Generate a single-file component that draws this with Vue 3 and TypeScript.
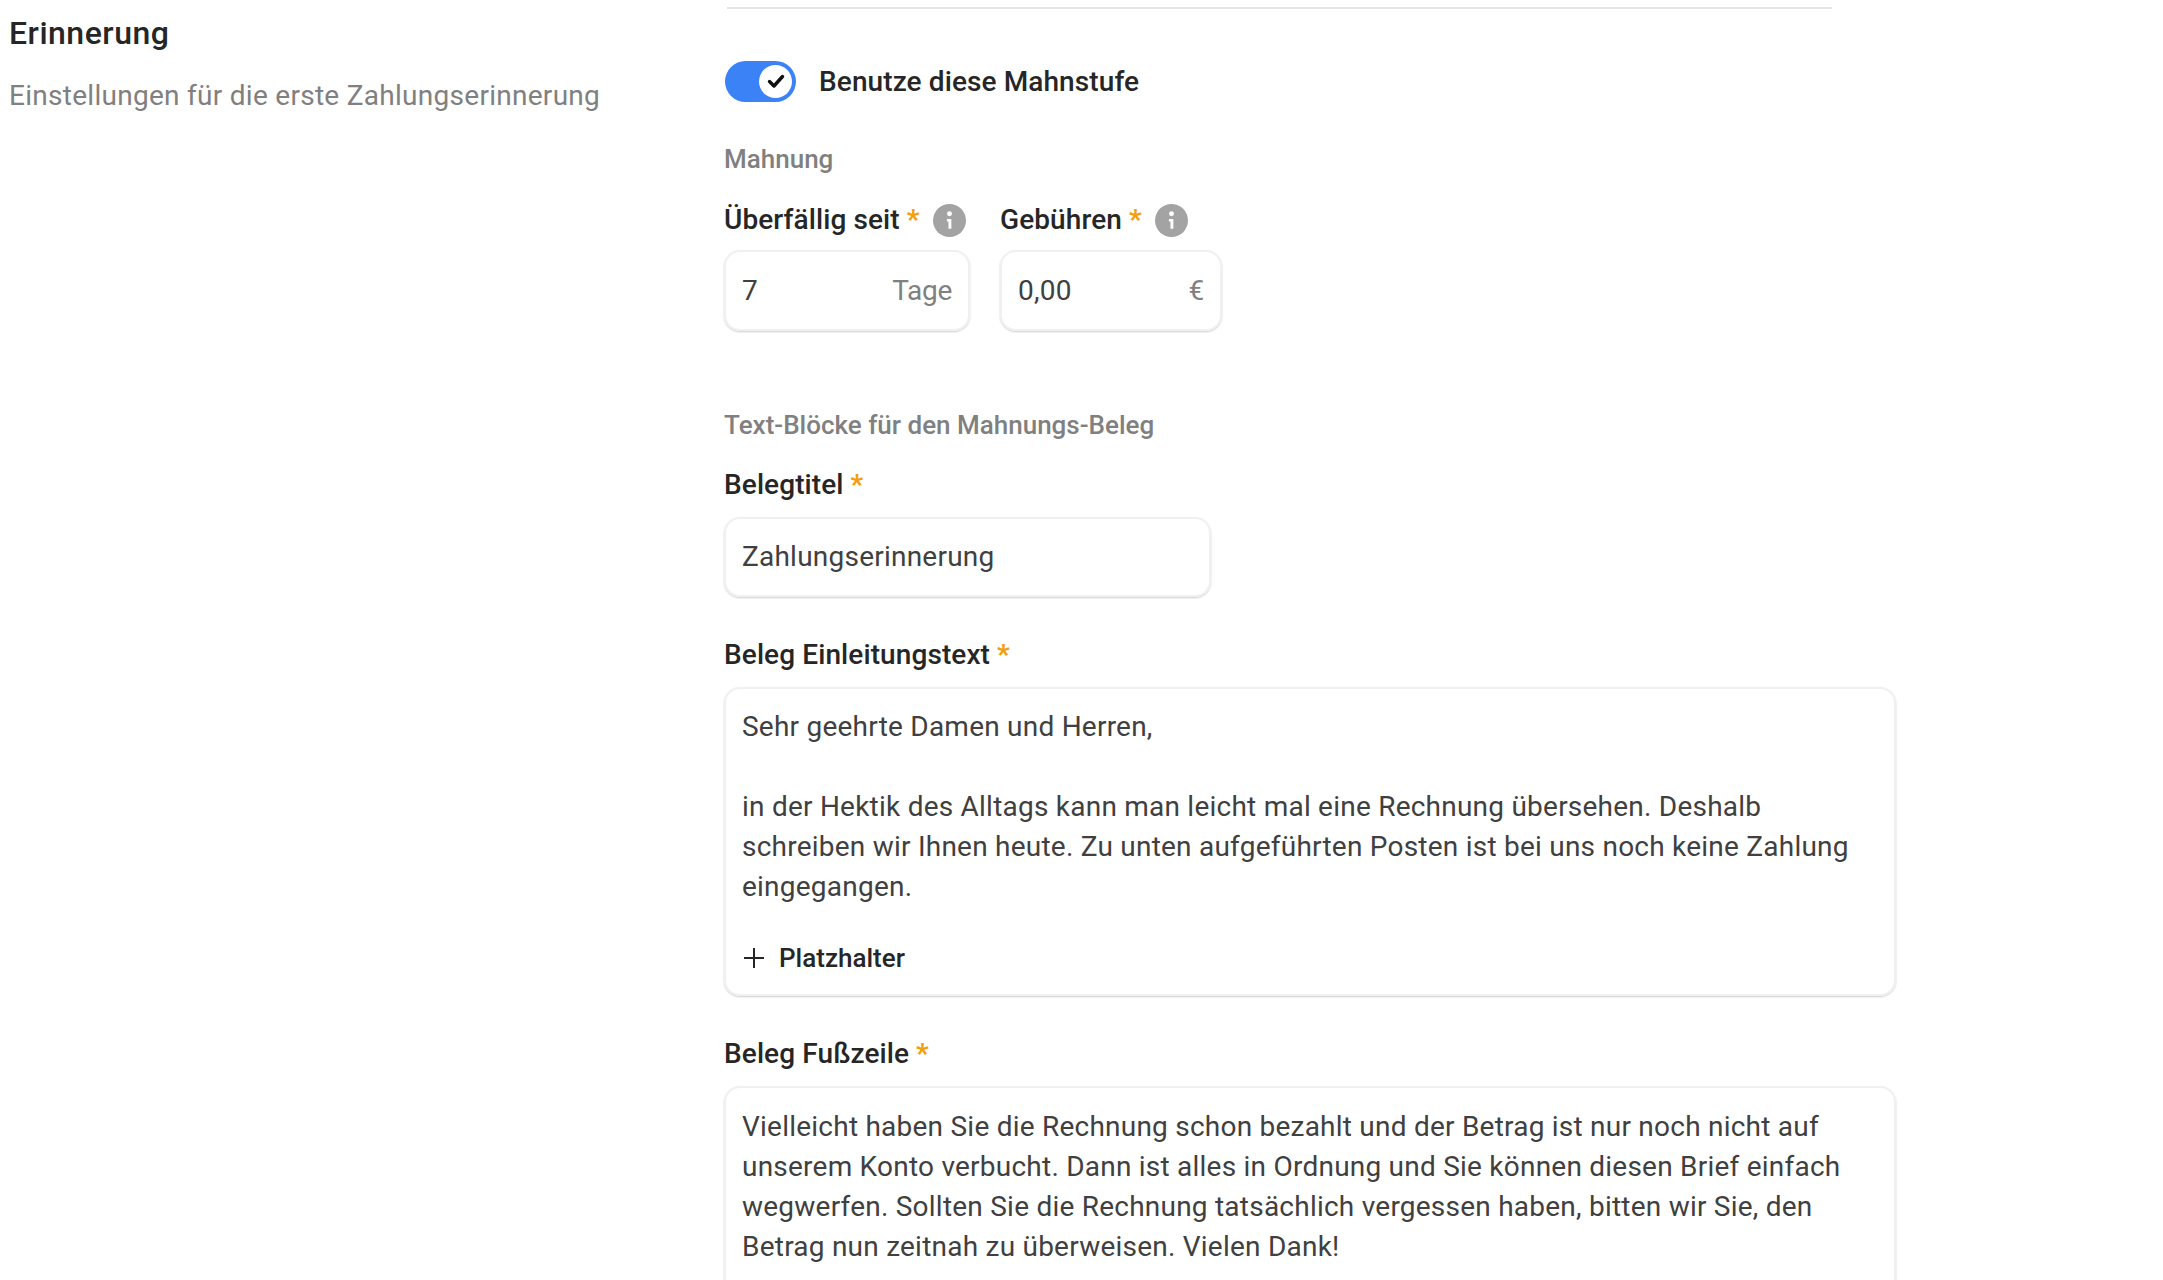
<script setup lang="ts">
const intro: string[] = [
  'Sehr geehrte Damen und Herren,',
  '',
  'in der Hektik des Alltags kann man leicht mal eine Rechnung übersehen. Deshalb',
  'schreiben wir Ihnen heute. Zu unten aufgeführten Posten ist bei uns noch keine Zahlung',
  'eingegangen.',
];
const footer: string[] = [
  'Vielleicht haben Sie die Rechnung schon bezahlt und der Betrag ist nur noch nicht auf',
  'unserem Konto verbucht. Dann ist alles in Ordnung und Sie können diesen Brief einfach',
  'wegwerfen. Sollten Sie die Rechnung tatsächlich vergessen haben, bitten wir Sie, den',
  'Betrag nun zeitnah zu überweisen. Vielen Dank!',
];
</script>

<template>
  <div class="page">
    <aside class="intro">
      <h2 class="intro-title">Erinnerung</h2>
      <p class="intro-sub">Einstellungen für die erste Zahlungserinnerung</p>
    </aside>

    <main class="form">
      <div class="divider"></div>

      <div class="switch-row">
        <span class="switch">
          <span class="knob">
            <svg width="20" height="20" viewBox="0 0 20 20"><path d="M3.5 10.5 8 15 16.5 5.5" fill="none" stroke="#111" stroke-width="3.4" stroke-linecap="round" stroke-linejoin="round" /></svg>
          </span>
        </span>
        <span class="switch-label">Benutze diese Mahnstufe</span>
      </div>

      <div class="section-label first">Mahnung</div>

      <div class="pair">
        <div class="field days">
          <label class="label">Überfällig seit <span class="req">*</span>
            <svg class="info" width="33" height="33" viewBox="0 0 32 32"><circle cx="16" cy="16" r="16" fill="#a3a3a3" /><circle cx="16" cy="9.5" r="2.4" fill="#fff" /><path d="M13.5 14.5H17.8V24H15V17H13.5Z" fill="#fff" /></svg>
          </label>
          <div class="input"><span>7</span><span class="unit">Tage</span></div>
        </div>
        <div class="field fee">
          <label class="label">Gebühren <span class="req">*</span>
            <svg class="info" width="33" height="33" viewBox="0 0 32 32"><circle cx="16" cy="16" r="16" fill="#a3a3a3" /><circle cx="16" cy="9.5" r="2.4" fill="#fff" /><path d="M13.5 14.5H17.8V24H15V17H13.5Z" fill="#fff" /></svg>
          </label>
          <div class="input"><span>0,00</span><span class="unit">€</span></div>
        </div>
      </div>

      <div class="section-label second">Text-Blöcke für den Mahnungs-Beleg</div>

      <div class="field title-field">
        <label class="label">Belegtitel <span class="req">*</span></label>
        <div class="input title-input"><span>Zahlungserinnerung</span></div>
      </div>

      <div class="field block-field">
        <label class="label">Beleg Einleitungstext <span class="req">*</span></label>
        <div class="textarea">
          <div v-for="(line, i) in intro" :key="i" class="line">{{ line }}</div>
          <div class="placeholder-btn">
            <svg width="22" height="22" viewBox="0 0 22 22"><path d="M11 1V21M1 11H21" fill="none" stroke="#262626" stroke-width="2" /></svg>
            <span>Platzhalter</span>
          </div>
        </div>
      </div>

      <div class="field block-field">
        <label class="label">Beleg Fußzeile <span class="req">*</span></label>
        <div class="textarea footer">
          <div v-for="(line, i) in footer" :key="i" class="line">{{ line }}</div>
        </div>
      </div>
    </main>
  </div>
</template>

<style scoped>
.page {
  display: grid;
  grid-template-columns: 714px 1173px;
  height: 1280px;
  padding-left: 9px;
  overflow: hidden;
  background: #fff;
  color: #404040;
  font-family: Roboto, "Liberation Sans", sans-serif;
  font-size: 28px;
  line-height: 40px;
  letter-spacing: 0.23px;
}

.form {
  margin-left: 1px;
}

.intro-title {
  margin: 13px 0 0;
  color: #262626;
  font-size: 32px;
  line-height: 40px;
  font-weight: 500;
  letter-spacing: 0.5px;
}

.intro-sub {
  margin: 23px 0 0;
  color: #808080;
  letter-spacing: 0.28px;
}

.divider {
  height: 2px;
  width: 1105px;
  margin: 7px 0 0 3px;
  background: #e5e5e5;
}

.switch-row {
  display: flex;
  align-items: center;
  gap: 23px;
  height: 40px;
  margin-top: 52px;
}

.switch {
  display: flex;
  align-items: center;
  justify-content: flex-end;
  box-sizing: border-box;
  width: 71px;
  height: 41px;
  margin-left: 1px;
  padding-right: 4px;
  border-radius: 21px;
  background: #3b82f6;
}

.knob {
  display: flex;
  align-items: center;
  justify-content: center;
  width: 33px;
  height: 33px;
  border-radius: 50%;
  background: #fff;
}

.switch-label,
.label {
  color: #262626;
  font-weight: 500;
  letter-spacing: 0.1px;
}

.switch-label {
  padding-top: 2px;
}

.section-label {
  color: #808080;
  font-size: 26px;
  line-height: 36px;
  font-weight: 500;
  letter-spacing: 0;
}

.section-label.first {
  margin-top: 40px;
}

.section-label.second {
  margin-top: 76px;
}

.pair {
  display: flex;
  gap: 30px;
  margin-top: 22px;
}

.label {
  display: flex;
  align-items: center;
  gap: 7px;
  box-sizing: border-box;
  height: 40px;
  padding-top: 2px;
}

.req {
  color: #f59e0b;
  font-weight: 700;
}

.info {
  margin-left: 6px;
}

.input {
  display: flex;
  align-items: center;
  justify-content: space-between;
  box-sizing: border-box;
  height: 81px;
  margin-top: 11px;
  padding: 0 16px;
  border: 2px solid #f0f0f0;
  border-radius: 16px;
  box-shadow: 0 1px 2px rgba(0, 0, 0, 0.2);
}

.days {
  width: 246px;
}

.fee {
  width: 222px;
}

.unit {
  color: #808080;
  letter-spacing: -0.3px;
}

.title-field {
  margin-top: 21px;
  width: 487px;
}

.title-input {
  height: 80px;
  margin-top: 13px;
}

.block-field {
  margin-top: 37px;
}

.textarea {
  box-sizing: border-box;
  height: 309px;
  margin-top: 13px;
  padding: 18px 16px 0;
  border: 2px solid #f0f0f0;
  border-radius: 16px;
  box-shadow: 0 1px 2px rgba(0, 0, 0, 0.2);
}

.textarea.footer {
  height: 320px;
  padding-top: 19px;
}

.line {
  min-height: 40px;
}

.placeholder-btn {
  display: flex;
  align-items: center;
  gap: 14px;
  margin-top: 31px;
  padding-left: 1px;
  color: #262626;
  font-size: 26px;
  font-weight: 500;
  letter-spacing: 0;
}
</style>

<style>
html,
body {
  margin: 0;
  overflow: hidden;
}
</style>
